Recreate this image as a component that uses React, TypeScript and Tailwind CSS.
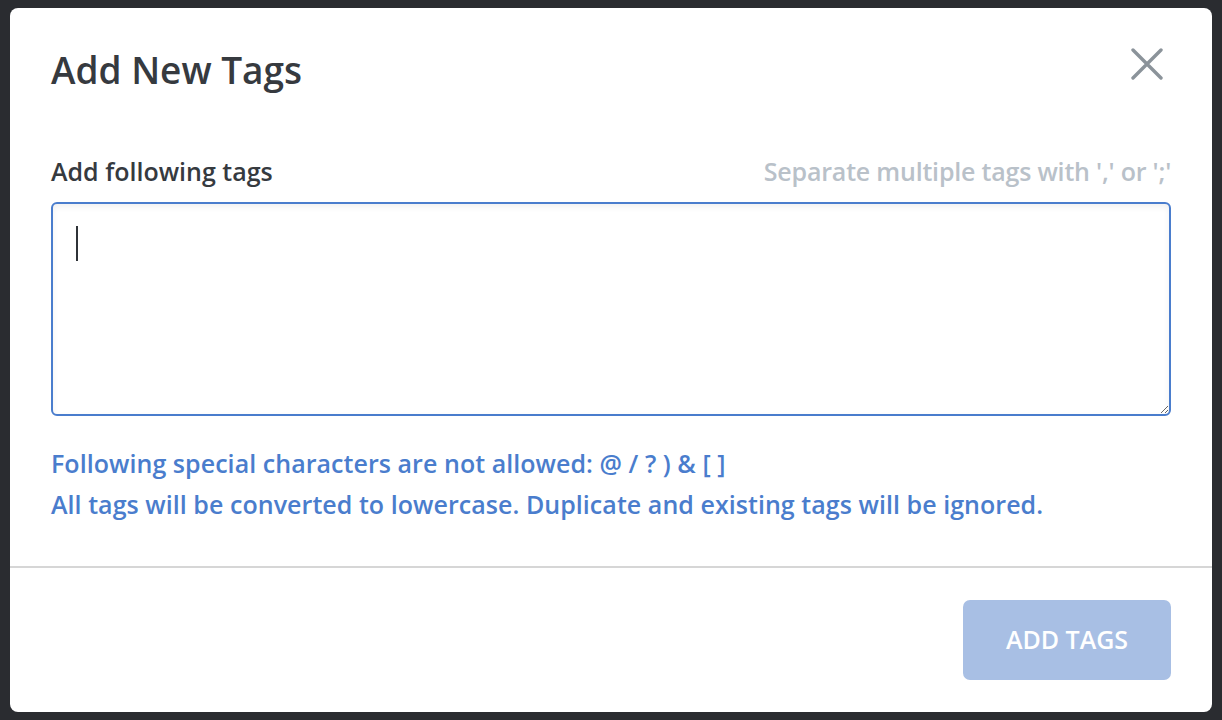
export default function App() {
  return (
    <div className="h-screen w-full bg-[#2a2c30] px-[10px] py-[8px] font-['Open_Sans',sans-serif]">
      <div className="flex h-full flex-col rounded-[8px] bg-white">
        {/* Header */}
        <div className="flex items-start justify-between px-[41px] pt-[36px]">
          <h1 className="text-[37px] font-semibold leading-[52px] text-[#363a3f]">Add New Tags</h1>
          <button className="mr-[8px] mt-[4px] text-[#8b939a]">
            <svg width="32" height="32" viewBox="0 0 32 32" fill="none" stroke="currentColor" strokeWidth="3.4" strokeLinecap="round">
              <path d="M2 2L30 30M30 2L2 30" />
            </svg>
          </button>
        </div>

        {/* Body */}
        <div className="flex flex-1 flex-col px-[41px] pt-[59px]">
          <div className="flex items-baseline justify-between">
            <label className="text-[25px] font-semibold leading-[32px] text-[#363a3f]">Add following tags</label>
            <span className="text-[25px] font-semibold leading-[32px] tracking-[-0.2px] text-[#b9c1c9]">
              Separate multiple tags with ',' or ';'
            </span>
          </div>
          <div className="relative mt-[15px]">
            <textarea className="block h-[214px] w-full rounded-[6px] border-2 border-[#4a7dcd] bg-white shadow-[inset_0_3px_6px_rgba(0,0,0,0.06)] outline-none" />
            <span className="absolute left-[25px] top-[24px] h-[35px] w-[2px] bg-[#2f3338]" />
          </div>
          <div className="mt-[27px] text-[25px] font-semibold leading-[41px] tracking-[0.05px] text-[#4a7dcd]">
            <p>Following special characters are not allowed: @ / ? ) &amp; [ ]</p>
            <p>All tags will be converted to lowercase. Duplicate and existing tags will be ignored.</p>
          </div>
        </div>

        {/* Footer */}
        <div className="flex justify-end border-t-2 border-[#d6d6d6] px-[41px] pb-[32px] pt-[32px]">
          <button className="flex h-[80px] w-[208px] items-center justify-center rounded-[7px] bg-[#a8bfe4] text-[25px] font-semibold text-white">
            ADD TAGS
          </button>
        </div>
      </div>
    </div>
  )
}
